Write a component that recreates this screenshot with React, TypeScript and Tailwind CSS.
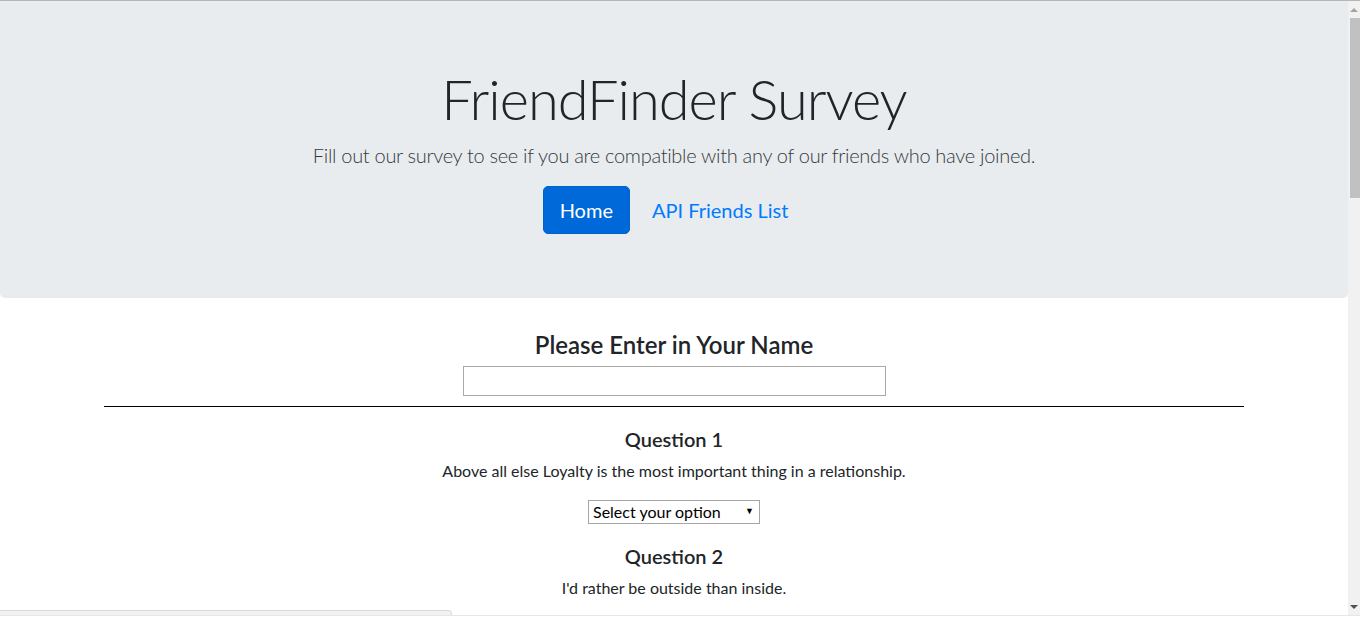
import React, { useState } from 'react';

const questions = [
  { title: 'Question 1', text: 'Above all else Loyalty is the most important thing in a relationship.' },
  { title: 'Question 2', text: "I'd rather be outside than inside." },
];

function OptionSelect() {
  return (
    <div className="relative mx-auto w-[172px]">
      <select className="block h-[24px] w-full appearance-none rounded-none border border-[#a6a6a6] bg-white pl-[4px] text-left text-[16px] leading-[20px] text-black">
        <option>Select your option</option>
        <option value="1">1 (Strongly Disagree)</option>
        <option value="2">2</option>
        <option value="3">3</option>
        <option value="4">4</option>
        <option value="5">5 (Strongly Agree)</option>
      </select>
      <span className="pointer-events-none absolute right-[6px] top-[4px] text-[9px] leading-[14px] text-black">▼</span>
    </div>
  );
}

function Scrollbar() {
  return (
    <div className="flex h-full w-[12px] shrink-0 flex-col bg-[#f1f1f1]">
      <div className="flex h-[17px] items-center justify-center">
        <div className="h-0 w-0 border-x-[4px] border-b-[4px] border-x-transparent border-b-[#a3a3a3]" />
      </div>
      <div className="ml-[2px] h-[180px] bg-[#c1c1c1]" />
      <div className="flex-1" />
      <div className="flex h-[17px] items-center justify-center">
        <div className="h-0 w-0 border-x-[4px] border-t-[4px] border-x-transparent border-t-[#505050]" />
      </div>
    </div>
  );
}

export default function App() {
  const [name, setName] = useState('');

  return (
    <div className="flex h-[623px] flex-col overflow-hidden border-t border-[#b5b5b5] bg-white font-['Lato',sans-serif] text-[#212529]">
      <div className="flex h-[614px] shrink-0">
        <div className="relative min-w-0 flex-1 overflow-hidden">
          {/* Jumbotron */}
          <div className="rounded-b-[5px] bg-[#e9ecef] px-8 py-16 text-center">
            <h1 className="mb-2 text-[56px] font-light leading-[67px] tracking-[-1px] text-[#212529]">FriendFinder Survey</h1>
            <p className="mb-4 text-[20px] font-light leading-[30px] tracking-[-0.3px] text-[#343a40]">
              Fill out our survey to see if you are compatible with any of our friends who have joined.
            </p>
            <div className="flex items-center justify-center gap-[5px]">
              <a className="rounded-[5px] border border-[#0062cc] bg-[#0069d9] px-4 py-2 text-[20px] leading-[30px] text-white">Home</a>
              <a className="rounded-[5px] border border-transparent px-4 py-2 text-[20px] leading-[30px] text-[#007bff]">API Friends List</a>
            </div>
          </div>

          {/* Survey */}
          <div className="mx-auto mt-8 max-w-[1140px] text-center">
            <h4 className="mb-[7px] text-[24px] font-semibold leading-[29px]">Please Enter in Your Name</h4>
            <input
              value={name}
              onChange={(e) => setName(e.target.value)}
              className="mx-auto block h-[30px] w-[423px] border border-[#a9a9a9] bg-white px-2 text-[16px]"
            />
            <hr className="mt-[10px] border-t border-black" />

            {questions.map((q) => (
              <div key={q.title} className="mt-[20px]">
                <h5 className="mb-2 text-[20px] font-semibold leading-[24px]">{q.title}</h5>
                <p className="mb-[17px] text-[16px] leading-[24px]">{q.text}</p>
                <OptionSelect />
              </div>
            ))}
          </div>

          {/* browser status bubble */}
          <div className="absolute bottom-0 left-0 h-[5px] w-[452px] rounded-tr-[4px] border-t border-r border-[#dadada] bg-[#f2f2f2]" />
        </div>
        <Scrollbar />
      </div>
      <div className="flex-1 border-t border-[#e6e6e6] bg-white" />
    </div>
  );
}
